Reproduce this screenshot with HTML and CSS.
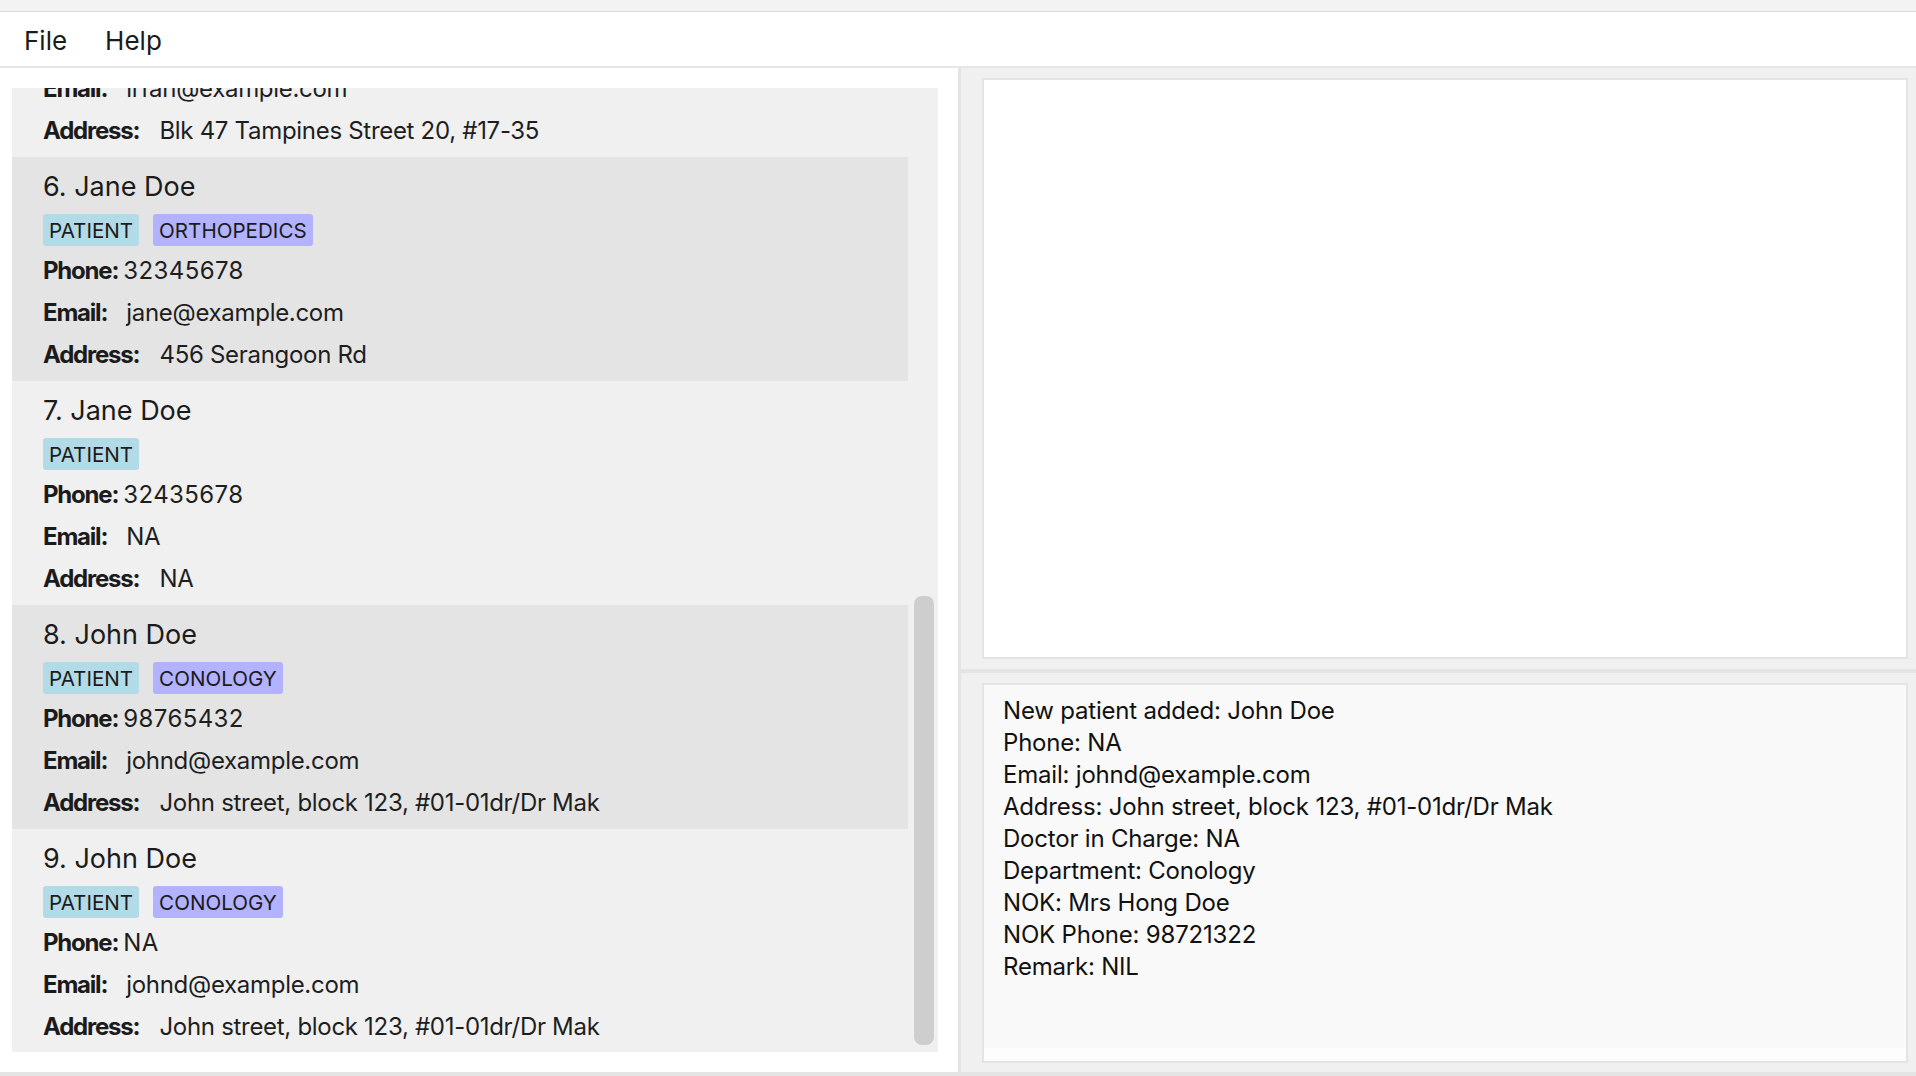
FILE: index.html
```html
<!DOCTYPE html>
<html lang="en">
<head>
<meta charset="utf-8">
<title>Patient Book</title>
<link rel="stylesheet" href="styles.css">
</head>
<body>
<div class="app">
  <div class="title-strip"></div>
  <div class="menubar">
    <span class="menu-item">File</span>
    <span class="menu-item">Help</span>
  </div>
  <div class="main">
    <div class="left-pane">
      <div class="list">
        <div class="cards">
          <div class="card light partial">
            <div class="row"><span class="label">Email:</span><span class="val v-email">irfan@example.com</span></div>
            <div class="row"><span class="label">Address:</span><span class="val v-addr">Blk 47 Tampines Street 20, #17-35</span></div>
          </div>
          <div class="card dark">
            <div class="name">6. Jane Doe</div>
            <div class="tags"><span class="tag patient">PATIENT</span><span class="tag dept">ORTHOPEDICS</span></div>
            <div class="row"><span class="label">Phone:</span><span class="val v-phone">32345678</span></div>
            <div class="row"><span class="label">Email:</span><span class="val v-email">jane@example.com</span></div>
            <div class="row"><span class="label">Address:</span><span class="val v-addr">456 Serangoon Rd</span></div>
          </div>
          <div class="card light">
            <div class="name">7. Jane Doe</div>
            <div class="tags"><span class="tag patient">PATIENT</span></div>
            <div class="row"><span class="label">Phone:</span><span class="val v-phone">32435678</span></div>
            <div class="row"><span class="label">Email:</span><span class="val v-email">NA</span></div>
            <div class="row"><span class="label">Address:</span><span class="val v-addr">NA</span></div>
          </div>
          <div class="card dark">
            <div class="name">8. John Doe</div>
            <div class="tags"><span class="tag patient">PATIENT</span><span class="tag dept">CONOLOGY</span></div>
            <div class="row"><span class="label">Phone:</span><span class="val v-phone">98765432</span></div>
            <div class="row"><span class="label">Email:</span><span class="val v-email">johnd@example.com</span></div>
            <div class="row"><span class="label">Address:</span><span class="val v-addr">John street, block 123, #01-01dr/Dr Mak</span></div>
          </div>
          <div class="card light">
            <div class="name">9. John Doe</div>
            <div class="tags"><span class="tag patient">PATIENT</span><span class="tag dept">CONOLOGY</span></div>
            <div class="row"><span class="label">Phone:</span><span class="val v-phone">NA</span></div>
            <div class="row"><span class="label">Email:</span><span class="val v-email">johnd@example.com</span></div>
            <div class="row"><span class="label">Address:</span><span class="val v-addr">John street, block 123, #01-01dr/Dr Mak</span></div>
          </div>
        </div>
        <div class="scroll-track"><div class="scroll-thumb"></div></div>
      </div>
    </div>
    <div class="vdivider"></div>
    <div class="right-pane">
      <div class="top-section">
        <div class="panel-box"></div>
      </div>
      <div class="hdivider"></div>
      <div class="bottom-section">
        <div class="result-box">
          <div class="result-text">New patient added: John Doe
Phone: NA
Email: johnd@example.com
Address: John street, block 123, #01-01dr/Dr Mak
Doctor in Charge: NA
Department: Conology
NOK: Mrs Hong Doe
NOK Phone: 98721322
Remark: NIL</div>
          <div class="result-band"></div>
        </div>
      </div>
    </div>
  </div>
  <div class="status-line"></div>
</div>
</body>
</html>
```

FILE: styles.css
```css
* { box-sizing: border-box; }
html, body { margin: 0; padding: 0; }
body {
  width: 1916px;
  height: 1076px;
  overflow: hidden;
  font-family: Inter, "Noto Sans", "Liberation Sans", sans-serif;
  color: #1b1b1b;
  background: #ffffff;
}
.app { display: flex; flex-direction: column; height: 1076px; }

.title-strip {
  height: 12px;
  background: #f3f3f3;
  border-bottom: 1px solid #dadada;
}
.menubar {
  height: 56px;
  background: #ffffff;
  border-bottom: 2px solid #e6e6e6;
  display: flex;
  align-items: center;
  padding-left: 24px;
  gap: 38px;
}
.menu-item {
  font-size: 26px;
  line-height: 32px;
  color: #1b1b1b;
  padding-top: 4px;
}

.main { display: flex; height: 1004px; }

.left-pane {
  width: 958px;
  background: #ffffff;
  padding: 20px 20px 20px 12px;
}
.list {
  display: flex;
  height: 964px;
  background: #f0f0f0;
  overflow: hidden;
}
.cards { width: 896px; margin-top: -20px; }
.card {
  height: 224px;
  padding: 12px 0 0 31px;
  display: flex;
  flex-direction: column;
}
.card.partial { height: 89px; padding-top: 0; }
.card.light { background: #f0f0f0; }
.card.dark { background: #e4e4e4; }
.name {
  font-size: 27px;
  line-height: 36px;
  height: 36px;
  color: #1b1b1b;
}
.tags {
  display: flex;
  gap: 14px;
  margin-top: 9px;
  height: 32px;
}
.tag {
  display: flex;
  align-items: center;
  height: 32px;
  padding: 0 6px 0 6px;
  border-radius: 3px;
  font-size: 20.6px;
  color: #1b1b1b;
}
.tag.patient { background: #b2dbe7; }
.tag.dept { background: #b2b2fe; }
.row {
  display: flex;
  font-size: 24px;
  line-height: 42px;
  height: 42px;
}
.tags + .row { margin-top: 4px; }
.label { font-weight: 700; letter-spacing: -1.2px; }
.val { color: #1e1e1e; letter-spacing: -0.3px; }
.v-phone { margin-left: 5px; letter-spacing: 0.4px; }
.v-email { margin-left: 19px; }
.v-addr { margin-left: 20px; }

.scroll-track { width: 30px; padding: 508px 4px 0 6px; }
.scroll-thumb {
  height: 449px;
  background: #cecece;
  border-radius: 8px;
}

.vdivider { width: 3px; background: #e4e4e4; }

.right-pane {
  flex: 1;
  background: #f0f0f0;
  display: flex;
  flex-direction: column;
}
.top-section { padding: 10px 8px 10px 21px; height: 601px; }
.panel-box {
  height: 581px;
  background: #ffffff;
  border: 2px solid #e4e4e4;
}
.hdivider { height: 4px; background: #e4e4e4; }
.bottom-section { padding: 10px 8px 9px 21px; height: 399px; }
.result-box {
  height: 380px;
  border: 2px solid #e4e4e4;
  display: flex;
  flex-direction: column;
}
.result-text {
  height: 363px;
  background: #f9f9f9;
  white-space: pre;
  font-size: 24px;
  line-height: 32px;
  padding: 10px 0 0 19px;
  color: #111111;
  letter-spacing: -0.2px;
}
.result-band { height: 13px; background: #fdfdfd; }

.status-line { height: 4px; background: #e4e4e4; }
```
